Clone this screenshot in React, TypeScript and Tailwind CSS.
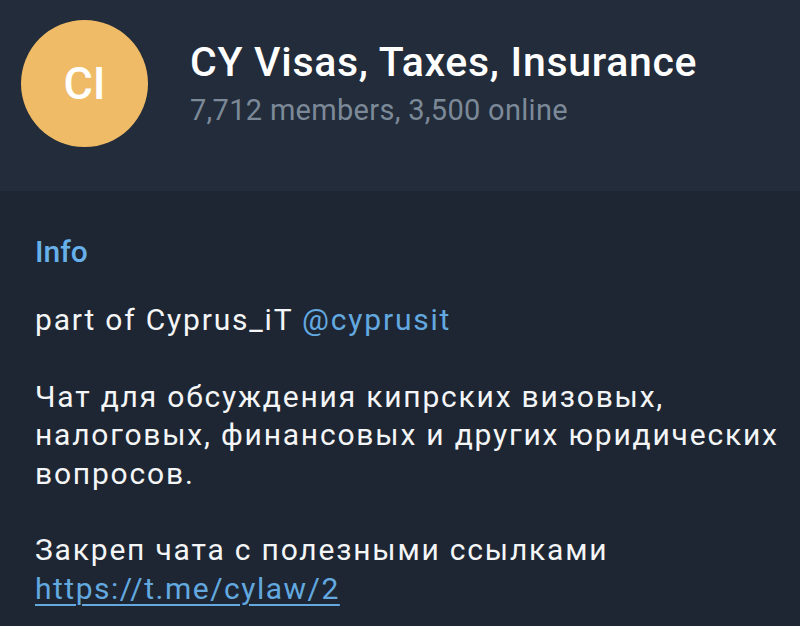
import React from "react";

export default function App() {
  return (
    <div className="w-[800px] h-[626px] overflow-hidden bg-[#1d2632] text-white" style={{ fontFamily: "Roboto, 'Noto Sans', sans-serif" }}>
      <div className="h-[191px] bg-[#222c3a] flex items-start pl-[21px] pt-[20px]">
        <div className="w-[127px] h-[127px] rounded-full bg-[#efbb67] flex items-center justify-center shrink-0">
          <span className="text-[45px] leading-none font-medium text-white">CI</span>
        </div>
        <div className="ml-[42px] pt-[18px]">
          <div className="text-[41px] leading-[48px] font-medium tracking-[0.7px] text-white whitespace-nowrap">CY Visas, Taxes, Insurance</div>
          <div className="mt-[6px] text-[29px] leading-[36px] tracking-[0.3px] text-[#7c8998] whitespace-nowrap">7,712 members, 3,500 online</div>
        </div>
      </div>
      <div className="pl-[35px] pt-[42px]">
        <div className="text-[30px] leading-[38px] font-medium text-[#67b0ea]">Info</div>
        <div className="mt-[30px] text-[30px] leading-[38.4px] tracking-[1.8px] text-[#f4f5f7] whitespace-nowrap">
          part of Cyprus_iT <span className="text-[#63a9e0]">@cyprusit</span>
          <br />
          <br />
          Чат для обсуждения кипрских визовых,
          <br />
          налоговых, финансовых и других юридических
          <br />
          вопросов.
          <br />
          <br />
          Закреп чата с полезными ссылками
          <br />
          <span className="text-[#63a9e0] underline underline-offset-[5px] decoration-[1.5px] tracking-[1.5px]">https://t.me/cylaw/2</span>
        </div>
      </div>
    </div>
  );
}
